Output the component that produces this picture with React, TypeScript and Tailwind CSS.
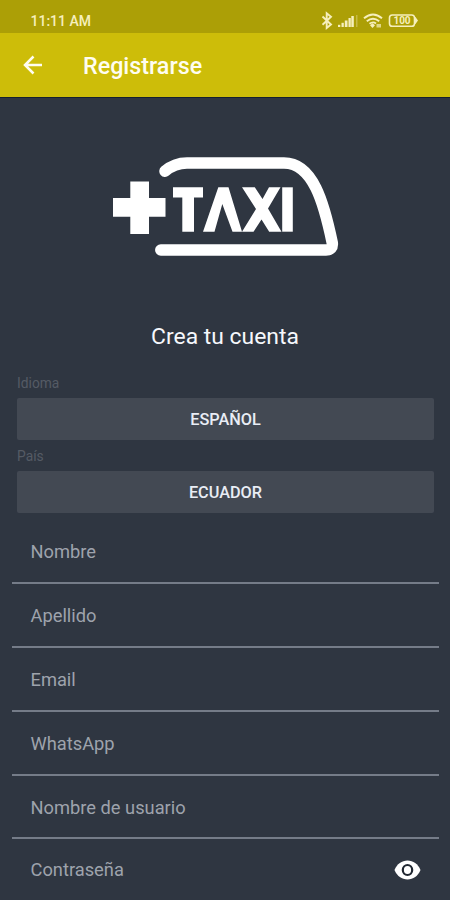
import React from 'react';

const fields = ['Nombre', 'Apellido', 'Email', 'WhatsApp', 'Nombre de usuario'];

function StatusIcons() {
  return (
    <svg className="absolute left-[318px] top-[8px]" width="102" height="24" viewBox="318 8 102 24" fill="none" stroke="#f6efbd">
      <path d="M322.500 16.500l8.500 8-4.300 3.500V13.200l4.300 3.500-8.500 8" strokeWidth="1.900" />
      <g fill="#f6efbd" stroke="none">
        <rect x="338" y="24.800" width="2.300" height="2.200" />
        <rect x="341.500" y="22.800" width="2.300" height="4.200" />
        <rect x="344.800" y="20.500" width="2.700" height="6.500" />
        <rect x="348.500" y="18" width="2.300" height="9" />
        <rect x="351.300" y="16" width="2.500" height="11" />
        <rect x="356" y="15" width="1.500" height="12" opacity=".35" />
        <path d="M370 25.200l2.500-2 2.500 2-2.500 2.800z" />
        <rect x="376.500" y="24" width="4.500" height="3.500" opacity=".7" />
        <path d="M414.500 17h1l2.500 3.500-2.500 3.500h-1z" />
      </g>
      <path d="M364 18.300q9-7.800 18 0M366.800 21.300q6.200-5 12.400 0M369.500 23.800q3.500-2.700 6.500-.3" strokeWidth="1.900" />
      <rect x="389.500" y="15" width="25" height="11.200" rx="2.800" strokeWidth="1.600" />
      <text x="402" y="24.200" textAnchor="middle" fill="#f6efbd" stroke="none" className="font-[Roboto,sans-serif] text-[10px] font-bold">100</text>
    </svg>
  );
}

function TaxiLogo() {
  return (
    <svg className="block" width="230" height="104" viewBox="111 154 230 104" fill="#fff" aria-label="+TAXI">
      <path d="M165 171.200Q174.500 163 187 163H284C313 163 324 203 332.300 243Q333 250 326 250H160.800" fill="none" stroke="#fff" strokeWidth="11.500" strokeLinecap="round" />
      <path d="M130.300 181.500H149V198H165.500V216.700H149V234H130.300V216.700H113V198H130.300z" />
      <path d="M173 187.300H203V197.500H194V231.700H182.300V197.500H173z" />
      <path d="M203 231.700L218.300 187.300H228.500L242 231.700H232.500L222.300 204L214.500 231.700z" />
      <path d="M242 187.300H254.800L262.500 199L269 187.300H280.500L268 208.500L281.500 231.700H269.200L261.500 219.500L253.500 231.700H242L256 209z" />
      <path d="M282.200 187.300H292.800V231.700H282.200z" />
    </svg>
  );
}

function Picker({ label, value }: { label: string; value: string }) {
  return (
    <div className="h-[73px]">
      <div className="h-[22px] text-[13.800px] leading-[15px] text-[#555b65]">{label}</div>
      <button className="block h-[42px] w-full rounded-[2px] bg-[#434953] pt-[3px] text-center text-[16.300px] font-medium text-[#e9edf5]">
        {value}
      </button>
    </div>
  );
}

export default function App() {
  return (
    <div className="flex h-[900px] w-[450px] flex-col overflow-hidden bg-[#2f3641] font-[Roboto,sans-serif]">
      <div className="relative h-[33px] shrink-0 bg-[#ac9f06]">
        <span className="absolute left-[30.500px] top-[12px] text-[14px] font-medium leading-[18px] text-[#f6efbd]">11:11 AM</span>
        <StatusIcons />
      </div>
      <header className="flex h-[65px] shrink-0 items-center border-b-[1.500px] border-[#16202e] bg-[#cdbd09]">
        <svg className="ml-[23px]" width="20" height="20" viewBox="0 0 20 20" fill="none" stroke="#fffdf0" strokeWidth="2.500">
          <path d="M19 10H2M10.500 1.500L2 10l8.500 8.500" />
        </svg>
        <h1 className="ml-[40px] pt-[2px] text-[23.300px] font-medium leading-[28px] text-[#fffdf0]">Registrarse</h1>
      </header>
      <main className="flex grow flex-col">
        <div className="flex justify-center pt-[56px] pl-[2px]">
          <TaxiLogo />
        </div>
        <h2 className="mt-[64px] text-center text-[22.900px] leading-[30px] text-[#f6f8fc]">Crea tu cuenta</h2>
        <section className="ml-[17px] mt-[24px] w-[417px]">
          <Picker label="Idioma" value="ESPAÑOL" />
          <Picker label="País" value="ECUADOR" />
        </section>
        <section className="-mt-[2px] ml-[12px] w-[427px] text-[18.300px] leading-[22px] text-[#9ea3ac]">
          {fields.map((f) => (
            <div key={f} className="h-[63.900px] border-b-2 border-[#757c88] pl-[18.500px] pt-[21px]">{f}</div>
          ))}
          <div className="flex items-start justify-between pl-[18.500px] pt-[20px]">
            <span>Contraseña</span>
            <svg className="mr-[18px] mt-[1px]" width="27" height="20" viewBox="0 0 27 20">
              <path d="M.5 10C3 4 7.800 .5 13.500 .5S24 4 26.500 10C24 16 19.200 19.500 13.500 19.500S3 16 .5 10z" fill="#fff" />
              <ellipse cx="13.500" cy="10" rx="4.700" ry="5" fill="none" stroke="#202731" strokeWidth="2.200" />
            </svg>
          </div>
        </section>
      </main>
    </div>
  );
}
